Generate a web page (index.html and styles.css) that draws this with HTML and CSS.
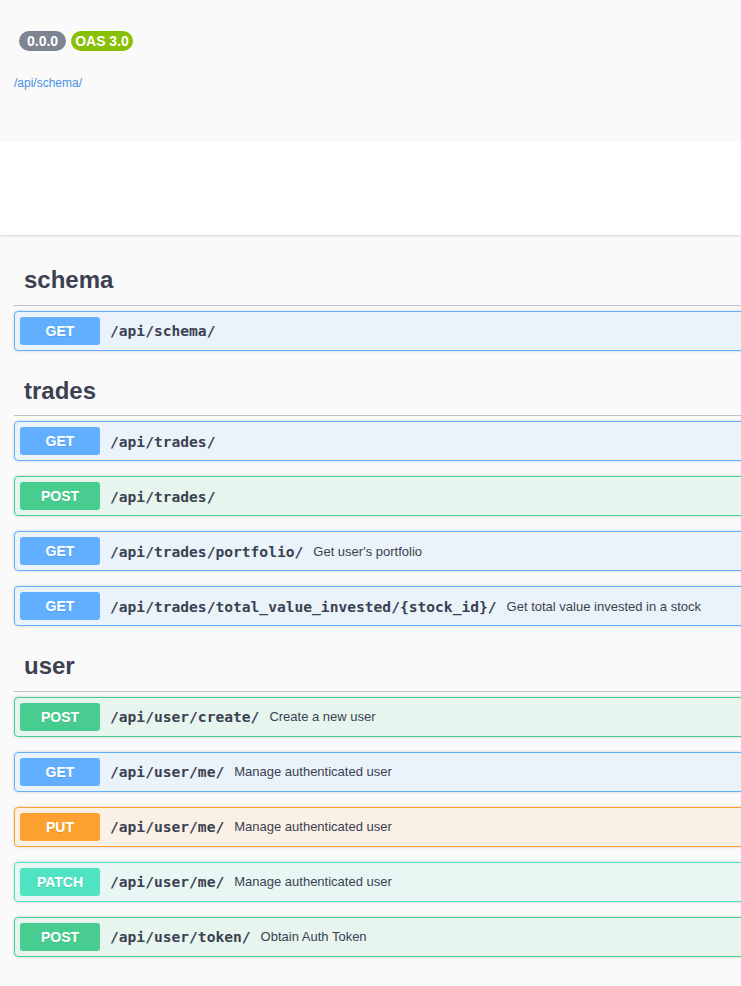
FILE: index.html
```html
<!DOCTYPE html>
<html>
<head>
<meta charset="utf-8">
<link rel="stylesheet" href="styles.css">
</head>
<body>
<div class="page">
  <div class="info">
    <div class="badges">
      <span class="pill pill-version">0.0.0</span>
      <span class="pill pill-oas">OAS 3.0</span>
    </div>
    <a class="spec-link" href="#">/api/schema/</a>
  </div>
  <div class="scheme"></div>
  <div class="wrapper">
    <section class="tag-section">
      <h3 class="tag">schema</h3>
      <div class="op op-get"><span class="method">GET</span><span class="path">/api/schema/</span></div>
    </section>
    <section class="tag-section">
      <h3 class="tag">trades</h3>
      <div class="op op-get"><span class="method">GET</span><span class="path">/api/trades/</span></div>
      <div class="op op-post"><span class="method">POST</span><span class="path">/api/trades/</span></div>
      <div class="op op-get"><span class="method">GET</span><span class="path">/api/trades/portfolio/</span><span class="desc">Get user's portfolio</span></div>
      <div class="op op-get"><span class="method">GET</span><span class="path">/api/trades/total_value_invested/{stock_id}/</span><span class="desc">Get total value invested in a stock</span></div>
    </section>
    <section class="tag-section">
      <h3 class="tag">user</h3>
      <div class="op op-post"><span class="method">POST</span><span class="path">/api/user/create/</span><span class="desc">Create a new user</span></div>
      <div class="op op-get"><span class="method">GET</span><span class="path">/api/user/me/</span><span class="desc">Manage authenticated user</span></div>
      <div class="op op-put"><span class="method">PUT</span><span class="path">/api/user/me/</span><span class="desc">Manage authenticated user</span></div>
      <div class="op op-patch"><span class="method">PATCH</span><span class="path">/api/user/me/</span><span class="desc">Manage authenticated user</span></div>
      <div class="op op-post"><span class="method">POST</span><span class="path">/api/user/token/</span><span class="desc">Obtain Auth Token</span></div>
    </section>
  </div>
</div>
</body>
</html>
```

FILE: styles.css
```css
html {
  overflow: hidden;
}
body {
  margin: 0;
  background: #fafafa;
  font-family: "Liberation Sans", Arial, sans-serif;
  color: #3b4151;
}
.page {
  width: 100%;
  height: 986px;
  overflow: hidden;
}
.info {
  height: 141px;
  box-sizing: border-box;
  padding: 31px 0 0 14px;
}
.badges {
  display: flex;
  gap: 5px;
  margin-left: 5px;
}
.pill {
  display: inline-block;
  height: 20px;
  box-sizing: border-box;
  padding: 2px 4px;
  line-height: 16px;
  border-radius: 57px;
  font-size: 14px;
  font-weight: bold;
  color: #fff;
  white-space: pre;
}
.pill-version {
  background: #7d8492;
  padding: 2px 8px;
}
.pill-oas {
  background: #89bf04;
}
.spec-link {
  display: block;
  margin-top: 25px;
  font-size: 12px;
  line-height: 14px;
  color: #4990e2;
  text-decoration: none;
}
.scheme {
  height: 94px;
  background: #fff;
  box-shadow: 0 1px 2px 0 rgba(0, 0, 0, 0.15);
  margin-bottom: 20px;
}
.wrapper {
  padding-left: 14px;
  margin-right: -40px;
}
.tag-section {
  display: flex;
  flex-direction: column;
}
.tag {
  margin: 0 0 5px;
  padding: 10px 20px 10px 10px;
  font-size: 24px;
  line-height: 29.5px;
  font-weight: bold;
  color: #3b4151;
  border-bottom: 1px solid rgba(59, 65, 81, 0.3);
}
.op {
  display: flex;
  align-items: center;
  height: 40px;
  box-sizing: border-box;
  padding: 0 5px;
  margin-bottom: 15px;
  border: 1px solid #000;
  border-radius: 4px;
  box-shadow: 0 0 3px rgba(0, 0, 0, 0.19);
}
.method {
  min-width: 80px;
  padding: 6px 0;
  box-sizing: border-box;
  border-radius: 3px;
  text-align: center;
  font-size: 14px;
  line-height: 16px;
  font-weight: bold;
  color: #fff;
  text-shadow: 0 1px 0 rgba(0, 0, 0, 0.1);
}
.path {
  padding: 0 10px;
  font-family: "DejaVu Sans Mono", "Liberation Mono", monospace;
  font-size: 14.6px;
  font-weight: bold;
  color: #3b4151;
  white-space: nowrap;
}
.desc {
  font-size: 13px;
  color: #3b4151;
  white-space: nowrap;
}
.op-get {
  border-color: #61affe;
  background: rgba(97, 175, 254, 0.1);
}
.op-get .method {
  background: #61affe;
}
.op-post {
  border-color: #49cc90;
  background: rgba(73, 204, 144, 0.1);
}
.op-post .method {
  background: #49cc90;
}
.op-put {
  border-color: #fca130;
  background: rgba(252, 161, 48, 0.1);
}
.op-put .method {
  background: #fca130;
}
.op-patch {
  border-color: #50e3c2;
  background: rgba(80, 227, 194, 0.1);
}
.op-patch .method {
  background: #50e3c2;
}
```
